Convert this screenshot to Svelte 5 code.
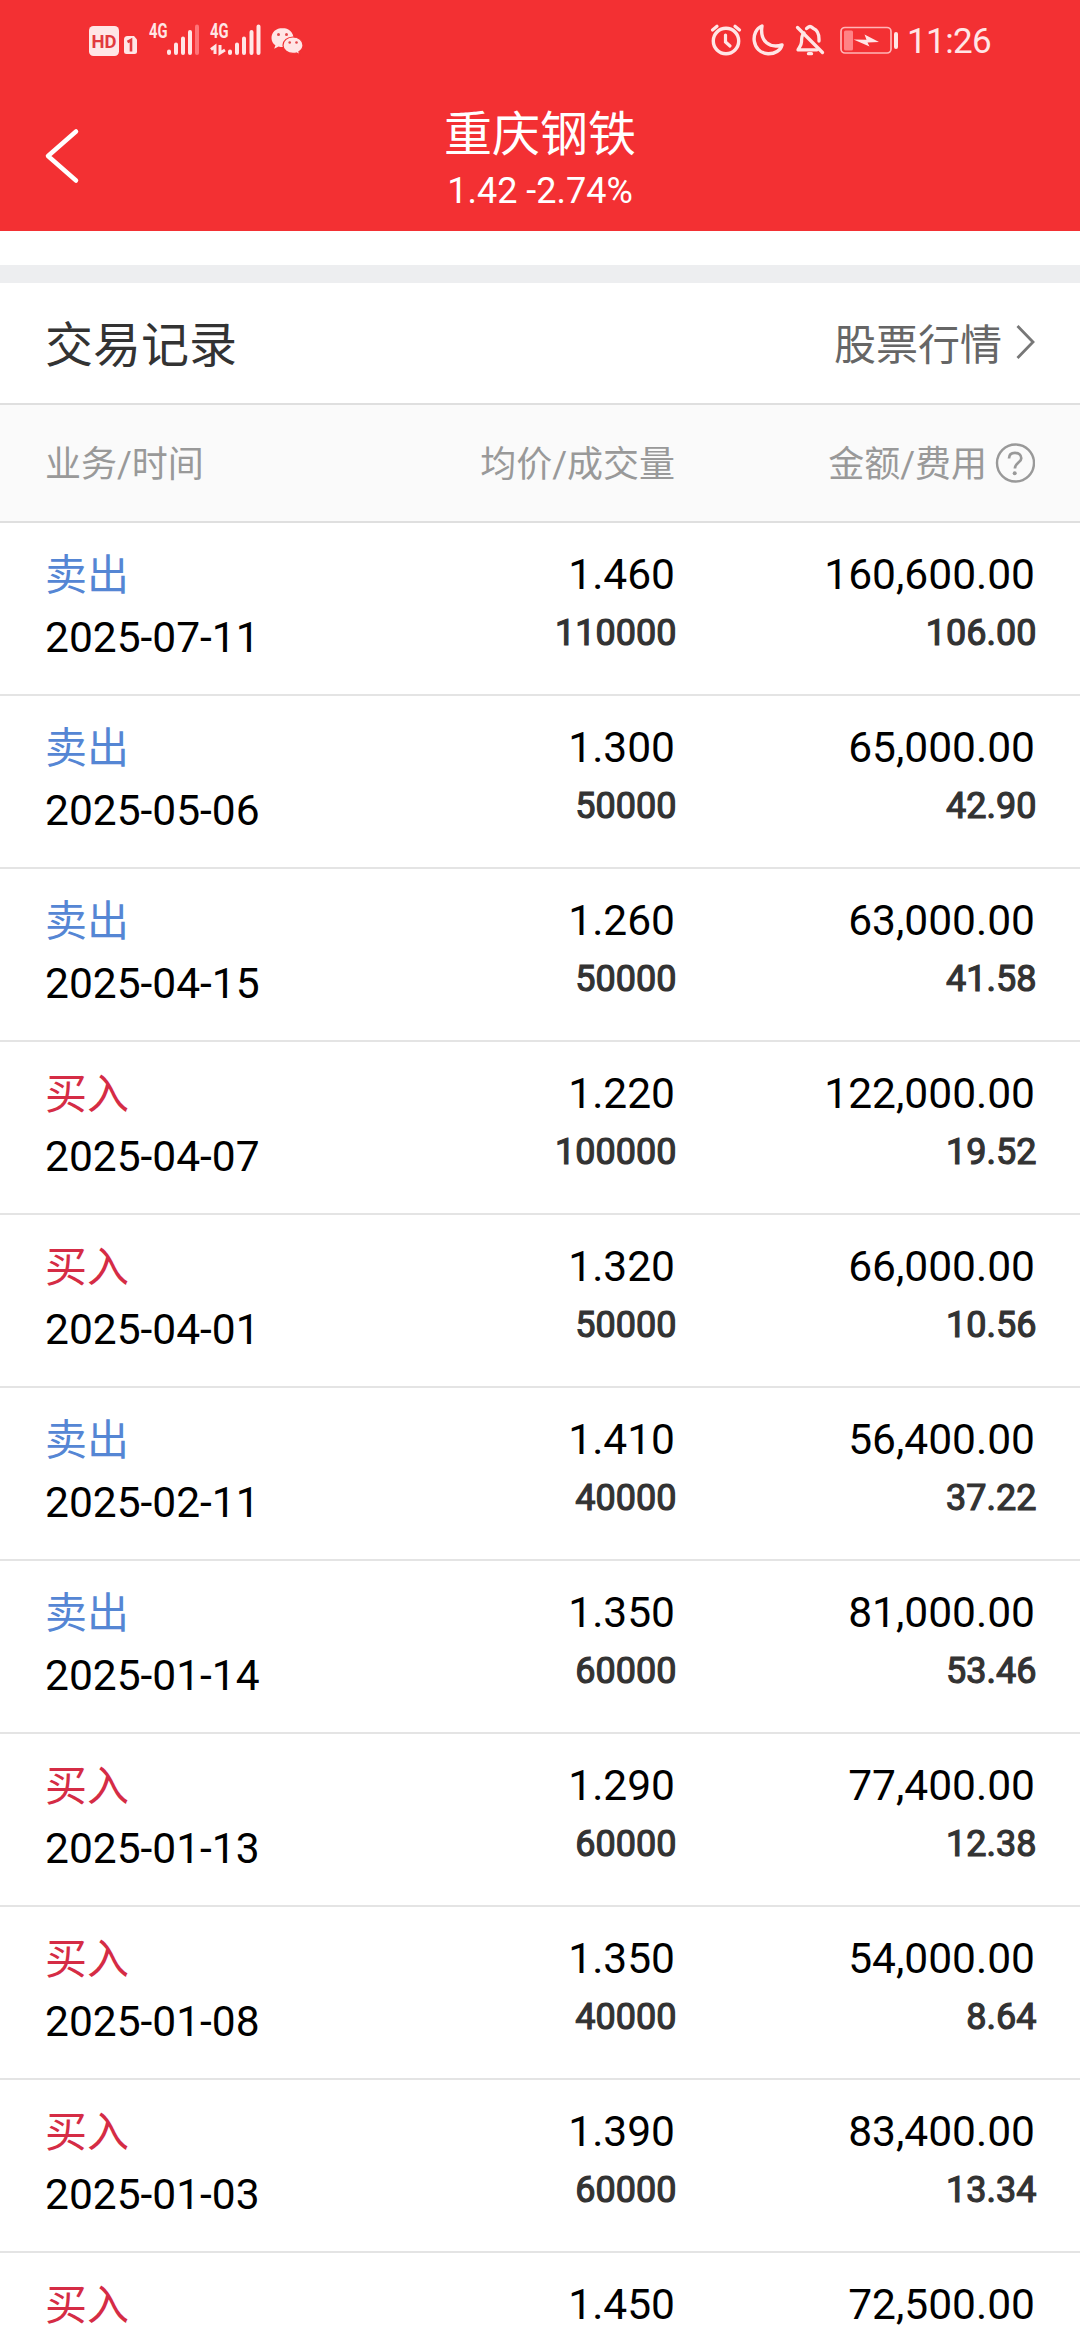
<script>
    const stock = { name: '重庆钢铁', price: '1.42', change: '-2.74%' };

    const records = [
        { type: 'sell', date: '2025-07-11', price: '1.460', volume: '110000', amount: '160,600.00', fee: '106.00' },
        { type: 'sell', date: '2025-05-06', price: '1.300', volume: '50000', amount: '65,000.00', fee: '42.90' },
        { type: 'sell', date: '2025-04-15', price: '1.260', volume: '50000', amount: '63,000.00', fee: '41.58' },
        { type: 'buy', date: '2025-04-07', price: '1.220', volume: '100000', amount: '122,000.00', fee: '19.52' },
        { type: 'buy', date: '2025-04-01', price: '1.320', volume: '50000', amount: '66,000.00', fee: '10.56' },
        { type: 'sell', date: '2025-02-11', price: '1.410', volume: '40000', amount: '56,400.00', fee: '37.22' },
        { type: 'sell', date: '2025-01-14', price: '1.350', volume: '60000', amount: '81,000.00', fee: '53.46' },
        { type: 'buy', date: '2025-01-13', price: '1.290', volume: '60000', amount: '77,400.00', fee: '12.38' },
        { type: 'buy', date: '2025-01-08', price: '1.350', volume: '40000', amount: '54,000.00', fee: '8.64' },
        { type: 'buy', date: '2025-01-03', price: '1.390', volume: '60000', amount: '83,400.00', fee: '13.34' },
        { type: 'buy', price: '1.450', amount: '72,500.00' }
    ];
</script>

<div class="screen">
    <header>
        <div class="status-bar">
            <div class="status-left">
                <svg width="60" height="60" viewBox="84 10 60 60">
                    <rect x="89" y="26" width="30" height="30" rx="4.5" fill="#ffe6e6" />
                    <text x="91.5" y="48" font-size="19" font-weight="700" fill="#e23a3e" textLength="25" lengthAdjust="spacingAndGlyphs">HD</text>
                    <path d="M127.5 36H134L137 39.5V51.5Q137 54 134.5 54H126.5Q124 54 124 51.5V39.5Q124 36 127.5 36Z" fill="#ffe6e6" />
                    <path d="M127.5 42L131 40V51.5" fill="none" stroke="#e23a3e" stroke-width="2.6" />
                </svg>
                <svg width="58" height="60" viewBox="144 10 58 60">
                    <text x="149" y="38" font-size="19.5" font-weight="700" fill="#ffe6e6" textLength="18.5" lengthAdjust="spacingAndGlyphs">4G</text>
                    <g stroke="#ffe6e6" stroke-width="4" stroke-linecap="round">
                        <path d="M169 51.5V53M176 44.5V53M183 38.5V53M190 32V53" />
                        <path d="M197 26.5V53" stroke="#ff7478" />
                    </g>
                </svg>
                <svg width="64" height="60" viewBox="202 10 64 60">
                    <text x="210" y="38" font-size="19.5" font-weight="700" fill="#ffe6e6" textLength="18.5" lengthAdjust="spacingAndGlyphs">4G</text>
                    <path d="M211 49.5L215 46.5V54M220 45V53L225 50" fill="none" stroke="#ffe6e6" stroke-width="3" />
                    <path d="M230 51.5V53M237 44.5V53M244 38.5V53M251.5 32V53M258.5 26.5V53" stroke="#ffe6e6" stroke-width="4" stroke-linecap="round" />
                </svg>
                <svg width="44" height="60" viewBox="266 10 44 60">
                    <path d="M282.5 28c-6.3 0-11 4.3-11 10 0 3.2 1.5 5.6 3.9 7.3l-1.2 3.4 4.4-2.2c1.3.4 2.5.5 3.9.5 6.3 0 11-3.8 11-9s-4.7-10-11-10Z" fill="#ffe6e6" />
                    <path d="M293 37c-5.6 0-10 3.6-10 8.2s4.4 8.2 10 8.2c1.2 0 2.3-.1 3.4-.4l3.4 1.7-.9-3c2.6-1.7 4.1-3.8 4.1-6.5 0-4.6-4.4-8.2-10-8.2Z" fill="#ffe6e6" stroke="#f33033" stroke-width="1.2" />
                    <g fill="#e2484b">
                        <circle cx="278.5" cy="34.5" r="1.5" /><circle cx="286.5" cy="34.5" r="1.5" />
                        <circle cx="289.7" cy="42.5" r="1.3" /><circle cx="296.5" cy="42.5" r="1.3" />
                    </g>
                </svg>
            </div>
            <div class="status-right">
                <svg width="40" height="60" viewBox="706 10 40 60" fill="none" stroke="#ffe6e6" stroke-linecap="round">
                    <circle cx="726" cy="41" r="12.7" stroke-width="3.4" />
                    <path d="M712.5 30L717 26.2M739.5 30L735 26.2" stroke-width="3.2" />
                    <path d="M725.5 35V42L730 46" stroke-width="3.2" />
                </svg>
                <svg width="42" height="60" viewBox="746 10 42 60">
                    <path d="M762 26C750 31 751.5 52.5 768 53.8C775 54 780.5 50.5 782 45C770 48.5 759.5 42 762 26Z" fill="none" stroke="#ffe6e6" stroke-width="3.4" stroke-linejoin="round" />
                </svg>
                <svg width="46" height="60" viewBox="788 10 46 60" fill="none" stroke="#ffe6e6" stroke-width="3.3" stroke-linecap="round" stroke-linejoin="round">
                    <path d="M804 33C801.5 35 801.5 38 801.5 42C801.5 45 800 46.5 798 49.8H817" />
                    <path d="M806.5 28.5C808 27.8 808 26.5 810 26.5S812 27.8 813.5 28.5C818 30.5 819 34 819 39V41" />
                    <path d="M797.5 27.5L822.5 52.5" />
                    <path d="M808.5 53.7H811.5" />
                </svg>
                <svg width="70" height="60" viewBox="834 10 70 60">
                    <rect x="841" y="27.5" width="50" height="25.5" rx="4" fill="none" stroke="#ffb5b7" stroke-width="1.7" />
                    <rect x="844" y="30.5" width="9" height="20" rx="1.5" fill="#ff8386" />
                    <path d="M853.5 39.5L866.5 39.8L864.5 34.5L879 42L867.5 42.5L869.5 46.5Z" fill="#ffe6e6" />
                    <path d="M896 34V47" stroke="#ffe6e6" stroke-width="4" stroke-linecap="round" />
                </svg>
                <span class="clock">11:26</span>
            </div>
        </div>
        <div class="nav">
            <button class="back" aria-label="返回">
                <svg width="40" height="60" viewBox="42 126 40 60">
                    <path d="M76 131.5L48 156L76 180.5" fill="none" stroke="#fff" stroke-width="4.5" stroke-linecap="round" stroke-linejoin="round" />
                </svg>
            </button>
            <div class="heading">
                <h1>{stock.name}</h1>
                <p>{stock.price} {stock.change}</p>
            </div>
        </div>
    </header>

    <div class="divider"></div>

    <div class="section-title">
        <h2>交易记录</h2>
        <div class="quote-link">
            <span>股票行情</span>
            <svg width="22" height="40" viewBox="0 0 22 40">
                <path d="M4.5 4L20 20L4.5 36" fill="none" stroke="#777" stroke-width="2.8" />
            </svg>
        </div>
    </div>

    <div class="columns table-head">
        <span>业务/时间</span>
        <span class="right">均价/成交量</span>
        <span class="right help">
            金额/费用
            <svg width="40" height="40" viewBox="0 0 40 40" fill="none" stroke="#999">
                <circle cx="20.5" cy="20" r="18.5" stroke-width="2.4" />
                <path d="M14 15.5C14 11.8 16.5 9.8 20 9.8S26.3 12 26.3 15.2C26.3 19.5 19.9 19.8 19.9 25.5" stroke-width="2.7" />
                <circle cx="19.7" cy="30.2" r="2" fill="#999" stroke="none" />
            </svg>
        </span>
    </div>

    {#each records as record}
        <div class="columns record">
            <div>
                <div class="type" class:buy={record.type === 'buy'}>{record.type === 'buy' ? '买入' : '卖出'}</div>
                {#if record.date}<div class="date">{record.date}</div>{/if}
            </div>
            <div class="right">
                <div class="main">{record.price}</div>
                {#if record.volume}<div class="sub">{record.volume}</div>{/if}
            </div>
            <div class="right">
                <div class="main">{record.amount}</div>
                {#if record.fee}<div class="sub">{record.fee}</div>{/if}
            </div>
        </div>
    {/each}
</div>

<style>
    :global(body) {
        margin: 0;
        background: #fff;
    }

    .screen {
        width: 1080px;
        height: 2340px;
        overflow: hidden;
        background: #fff;
        font-family: Roboto, "Noto Sans CJK SC", sans-serif;
    }

    svg {
        display: block;
        flex: none;
    }

    header {
        height: 231px;
        background: #f33033;
        color: #fff;
    }

    .status-bar {
        display: flex;
        justify-content: space-between;
        height: 72px;
        padding: 10px 88px 0 84px;
        box-sizing: border-box;
    }

    .status-left,
    .status-right {
        display: flex;
    }

    .clock {
        width: 85px;
        padding-left: 3px;
        font-size: 35px;
        line-height: 63px;
        letter-spacing: -0.6px;
        color: #ffe6e6;
        white-space: nowrap;
    }

    .nav {
        display: grid;
        grid-template-columns: 140px 1fr 140px;
        height: 159px;
    }

    .back {
        margin: 0;
        padding: 54px 0 0 42px;
        border: 0;
        background: none;
        display: flex;
        align-items: flex-start;
    }

    .heading {
        padding-top: 31px;
        text-align: center;
    }

    h1,
    h2,
    p {
        margin: 0;
        font-weight: 400;
    }

    h1 {
        font-size: 48px;
        line-height: 64px;
    }

    p {
        font-size: 36px;
        line-height: 49px;
    }

    .divider {
        height: 18px;
        margin-top: 34px;
        background: #edeef0;
    }

    .section-title {
        display: flex;
        align-items: center;
        justify-content: space-between;
        height: 120px;
        padding: 0 45px;
        border-bottom: 2px solid #dfdfdf;
    }

    h2 {
        padding-bottom: 4px;
        font-size: 48px;
        color: #333;
    }

    .quote-link {
        display: flex;
        align-items: center;
        gap: 11px;
        padding-bottom: 3px;
        font-size: 42px;
        color: #666;
    }

    .columns {
        display: grid;
        grid-template-columns: 315px 315px 360px;
        padding: 0 45px;
    }

    .right {
        text-align: right;
    }

    .table-head {
        height: 116px;
        line-height: 120px;
        border-bottom: 2px solid #dfdfdf;
        background: #fafafa;
        font-size: 36px;
        color: #999;
    }

    .help {
        display: flex;
        align-items: center;
        justify-content: flex-end;
        gap: 8px;
    }

    .help svg {
        margin-bottom: 5px;
    }

    .record {
        height: 171px;
        border-bottom: 2px solid #e4e4e4;
    }

    .type {
        padding-top: 23px;
        font-size: 42px;
        line-height: 60px;
        color: #5586d4;
    }

    .type.buy {
        color: #d52c45;
    }

    .date {
        font-size: 42.5px;
        line-height: 64px;
        color: #000;
    }

    .main {
        padding-top: 22px;
        font-size: 42.5px;
        line-height: 60px;
        color: #000;
    }

    /* the volume and fee use a synthetic bold, so the regular glyph widths stay */
    .sub {
        margin-right: -1.5px;
        font-size: 36px;
        line-height: 57px;
        -webkit-text-stroke: 1.2px #333;
        color: #333;
    }
</style>
